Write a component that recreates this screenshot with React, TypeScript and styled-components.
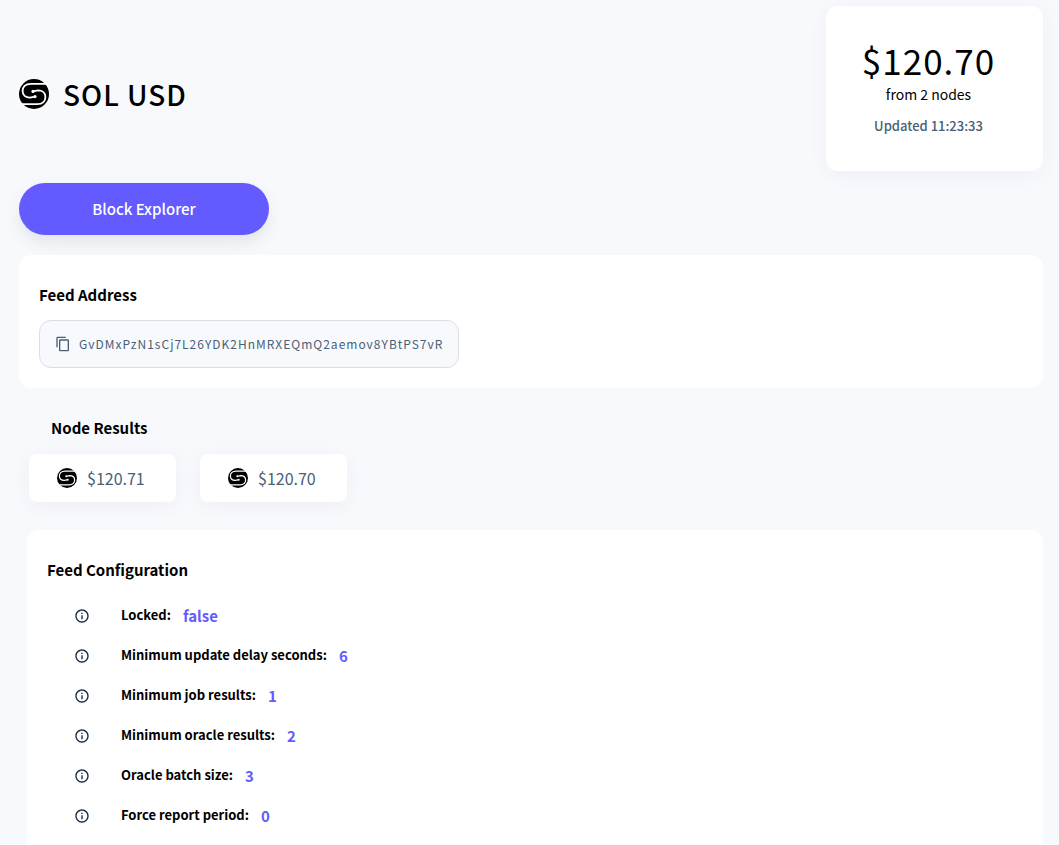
import React from "react";
import styled, { createGlobalStyle } from "styled-components";
import { MdContentCopy, MdInfoOutline } from "react-icons/md";

const GlobalStyle = createGlobalStyle`
  *, *::before, *::after { box-sizing: border-box; }
  body {
    margin: 0;
    background: #f8f9fd;
    color: #000;
    font-family: "Noto Sans CJK SC", "Noto Sans", sans-serif;
    font-size: 14px;
    line-height: 20px;
    overflow-x: hidden;
  }
  h1, h2, p, ul, dl, dd { margin: 0; padding: 0; }
`;

const Page = styled.main`
  display: flex;
  flex-direction: column;
  padding: 6px 16px 0 19px;
`;

const Header = styled.header`
  display: flex;
  justify-content: space-between;
  align-items: center;
`;

const Title = styled.h1`
  display: flex;
  align-items: center;
  gap: 14px;
  padding-top: 10px;
  font-size: 28px;
  line-height: 40px;
  font-weight: 500;
  letter-spacing: 1px;
`;

const PriceCard = styled.section`
  width: 217px;
  padding: 30px 12px 35px 0;
  border-radius: 12px;
  background: #fff;
  box-shadow: 0 4px 20px rgba(40, 50, 80, 0.05);
  text-align: center;
`;

const Price = styled.p`
  font-size: 35px;
  line-height: 48px;
  letter-spacing: 1px;
`;

const Updated = styled.p`
  margin-top: 12px;
  color: #4a5f75;
  font-size: 13px;
  font-weight: 500;
`;

const ExplorerButton = styled.button`
  width: 250px;
  height: 52px;
  margin-top: 12px;
  border: 0;
  border-radius: 26px;
  background: #635bff;
  box-shadow: 0 8px 16px rgba(40, 60, 60, 0.1);
  color: #fff;
  font: 500 15px/20px "Noto Sans CJK SC", "Noto Sans", sans-serif;
  cursor: pointer;
`;

const Card = styled.section<{ $inset?: boolean }>`
  margin: ${(p) => (p.$inset ? "28px 0 0 8px" : "20px 0 0")};
  padding: 30px 20px 20px;
  border-radius: 12px;
  background: #fff;
`;

const Heading = styled.h2`
  font-size: 15px;
  line-height: 20px;
  font-weight: 700;
`;

const AddressButton = styled.button`
  display: flex;
  align-items: center;
  gap: 8px;
  height: 48px;
  margin-top: 15px;
  padding: 0 15px;
  border: 1px solid #dcdee3;
  border-radius: 12px;
  background: #f8f9fd;
  color: #4a5f75;
  font: 400 12px/20px "Noto Sans CJK SC", "Noto Sans", sans-serif;
  letter-spacing: 1px;
  cursor: pointer;
`;

const Results = styled.section`
  padding: 30px 10px 0;
`;

const ResultsHeading = styled(Heading)`
  padding-left: 22px;
`;

const ResultList = styled.ul`
  display: flex;
  flex-wrap: wrap;
  gap: 24px;
  margin-top: 16px;
  list-style: none;
`;

const Result = styled.li`
  display: flex;
  align-items: center;
  gap: 10px;
  width: 147px;
  height: 48px;
  padding-left: 28px;
  border-radius: 8px;
  background: #fff;
  box-shadow: 0 4px 20px rgba(40, 50, 80, 0.05);
  color: #4a5f75;
  font-size: 16px;
`;

const Settings = styled.dl`
  display: flex;
  flex-direction: column;
  gap: 18px;
  padding: 25px 0 20px 27px;
`;

const Setting = styled.div`
  display: flex;
  align-items: center;

  svg { color: #12283e; }
`;

const SettingName = styled.dt`
  padding: 0 12px 2px 31px;
  font-size: 13px;
  font-weight: 700;
`;

const SettingValue = styled.dd`
  color: #635bff;
  font-size: 15px;
  font-weight: 700;
`;

function FeedLogo({ size }: { size: number }) {
  const arm = "M29 4.800H12C6 4.800 3.600 8 3.600 12C3.600 16 6.500 18.600 11 18.600L16 17.600";
  return (
    <svg width={size} height={size} viewBox="0 0 30 30" aria-hidden="true">
      <circle cx="15" cy="15" r="15" />
      <g fill="none" stroke="#fff" strokeWidth="1.800">
        <path d={arm} />
        <path d={arm} transform="rotate(180 15 15)" />
      </g>
      <circle cx="16" cy="17.600" r="1.600" fill="#fff" />
      <circle cx="14" cy="12.400" r="1.600" fill="#fff" />
    </svg>
  );
}

const results = ["$120.71", "$120.70"];

const settings = [
  ["Locked", "false"],
  ["Minimum update delay seconds", "6"],
  ["Minimum job results", "1"],
  ["Minimum oracle results", "2"],
  ["Oracle batch size", "3"],
  ["Force report period", "0"],
];

export default function App() {
  return (
    <>
      <GlobalStyle />
      <Page>
        <Header>
          <Title>
            <FeedLogo size={30} />
            SOL USD
          </Title>
          <PriceCard>
            <Price>$120.70</Price>
            <p>from 2 nodes</p>
            <Updated>Updated 11:23:33</Updated>
          </PriceCard>
        </Header>
        <div>
          <ExplorerButton type="button">Block Explorer</ExplorerButton>
        </div>
        <Card>
          <Heading>Feed Address</Heading>
          <AddressButton type="button">
            <MdContentCopy size={16} />
            GvDMxPzN1sCj7L26YDK2HnMRXEQmQ2aemov8YBtPS7vR
          </AddressButton>
        </Card>
        <Results>
          <ResultsHeading>Node Results</ResultsHeading>
          <ResultList>
            {results.map((value) => (
              <Result key={value}>
                <FeedLogo size={20} />
                {value}
              </Result>
            ))}
          </ResultList>
        </Results>
        <Card $inset>
          <Heading>Feed Configuration</Heading>
          <Settings>
            {settings.map(([name, value]) => (
              <Setting key={name}>
                <MdInfoOutline size={16} />
                <SettingName>{name}:</SettingName>
                <SettingValue>{value}</SettingValue>
              </Setting>
            ))}
          </Settings>
        </Card>
      </Page>
    </>
  );
}
